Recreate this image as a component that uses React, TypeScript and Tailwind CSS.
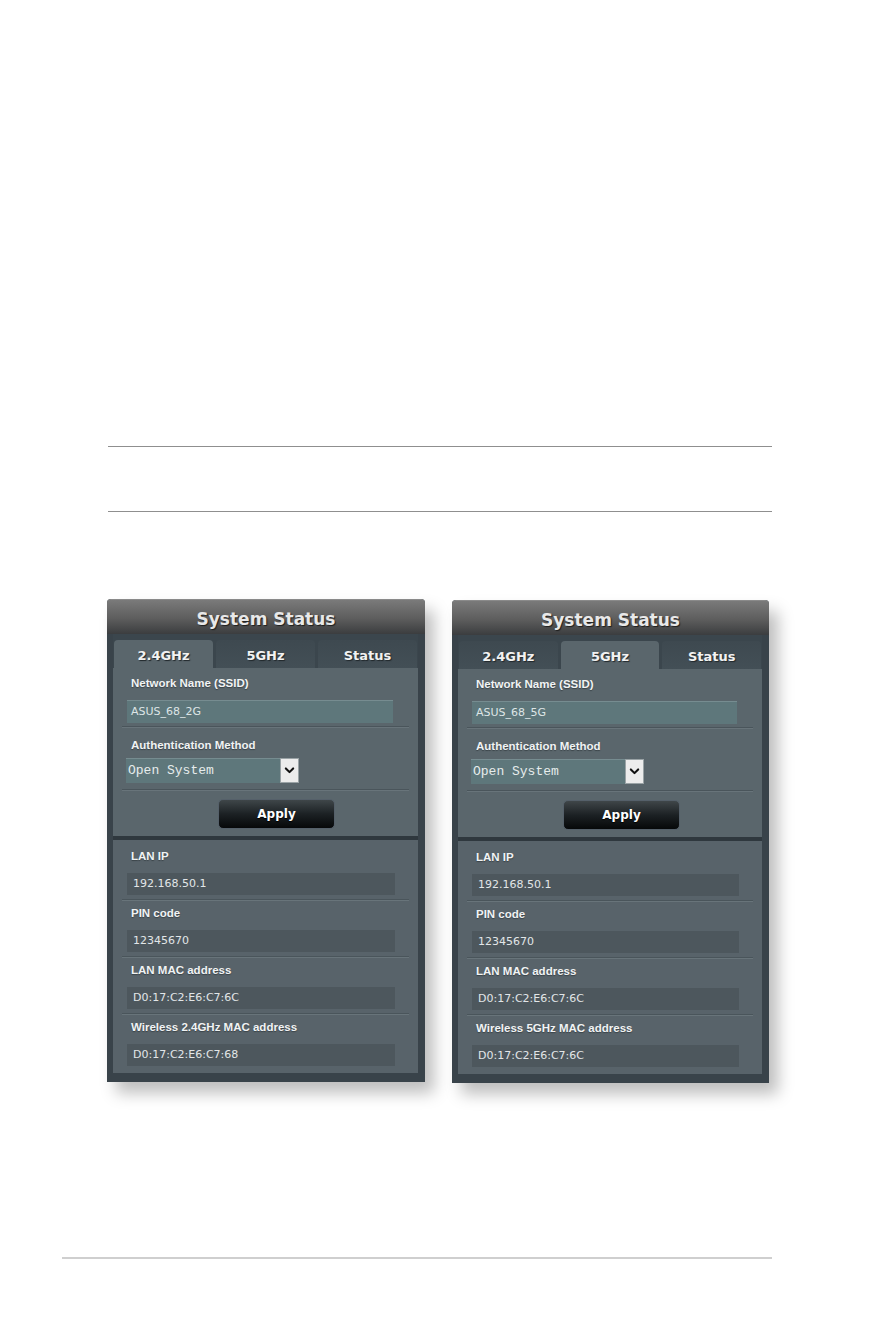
import React from 'react';

type PanelProps = {
  activeTab: number;
  ssid: string;
  wirelessLabel: string;
  wirelessMac: string;
  width: string;
  offset?: string;
};

const tabs = ['2.4GHz', '5GHz', 'Status'];

function Separator() {
  return <div className="mx-[9px] h-px bg-[#4a555b] shadow-[0_1px_0_#68747a]" />;
}

function Chevron() {
  return (
    <svg viewBox="0 0 16 16" className="w-[13px] h-[13px]">
      <path d="M3.5 5.5 L8 10 L12.5 5.5" fill="none" stroke="#111" strokeWidth="2.6" strokeLinecap="round" strokeLinejoin="round" />
    </svg>
  );
}

function InfoRow({ label, value, last }: { label: string; value: string; last?: boolean }) {
  return (
    <div className={last ? '' : 'pb-[6px]'}>
      <div className="h-[16px] pl-[18px] flex items-center text-[11.5px] font-bold text-[#f1f3f4] font-['Liberation_Sans',Arial,sans-serif] [text-shadow:0_1px_1px_#3a4348]">
        {label}
      </div>
      <div className="mt-[8px] ml-[14px] mr-[23px] h-[22px] bg-[#4d575d] flex items-center pl-[6px] text-[11px] text-[#e2e6e8] font-['DejaVu_Sans',Verdana,sans-serif]">
        {value}
      </div>
      {!last && (
        <div className="mt-[4px]">
          <Separator />
        </div>
      )}
    </div>
  );
}

function StatusPanel({ activeTab, ssid, wirelessLabel, wirelessMac, width, offset }: PanelProps) {
  return (
    <div className={`${width} ${offset ?? ''} h-[483px] bg-[#39434a] rounded-t-[4px] flex flex-col shadow-[9px_11px_16px_rgba(0,0,0,0.26)]`}>
      {/* header */}
      <div className="h-[35px] rounded-t-[4px] border-t border-[#8a8a8a] bg-[linear-gradient(to_bottom,#7a7a7a,#5d5d5d_55%,#3b3d3f)] flex items-center justify-center pt-[6px] text-[17px] font-bold text-[#e8e8e8] font-['DejaVu_Sans',Verdana,sans-serif] [text-shadow:1px_1px_1px_#1e1e1e]">
        System Status
      </div>

      <div className="flex-1 flex flex-col pl-[6px] pr-[7px] pb-[9px]">
        {/* tabs */}
        <div className="h-[34px] grid grid-cols-3 gap-[3px] px-px pt-[6px] bg-[#3b464d]">
          {tabs.map((tab, index) => (
            <div
              key={tab}
              className={`rounded-t-[4px] flex items-center justify-center pt-[4px] text-[13px] font-bold text-[#f2f2f2] font-['DejaVu_Sans',Verdana,sans-serif] [text-shadow:1px_1px_1px_#20272b] ${
                index === activeTab ? 'bg-[#5a666c]' : 'bg-[linear-gradient(to_bottom,#3e4950,#434f56)]'
              }`}
            >
              {tab}
            </div>
          ))}
        </div>

        {/* wireless settings */}
        <div className="h-[168px] bg-[#5a666c] pt-[8px] flex flex-col">
          <div className="h-[16px] pl-[18px] flex items-center text-[11.5px] font-bold text-[#f1f3f4] font-['Liberation_Sans',Arial,sans-serif] [text-shadow:0_1px_1px_#3a4348]">
            Network Name (SSID)
          </div>
          <div className="mt-[8px] ml-[14px] mr-[25px] h-[23px] bg-[#5e777b] border-t border-[#768c90] flex items-center pl-[4px] text-[11px] text-[#dde5e6] font-['DejaVu_Sans',Verdana,sans-serif]">
            {ssid}
          </div>
          <div className="mt-[3px]">
            <Separator />
          </div>
          <div className="mt-[11px] h-[16px] pl-[18px] flex items-center text-[11.5px] font-bold text-[#f1f3f4] font-['Liberation_Sans',Arial,sans-serif] [text-shadow:0_1px_1px_#3a4348]">
            Authentication Method
          </div>
          <div className="mt-[4px] ml-[13px] flex h-[25px]">
            <div className="w-[154px] bg-[#5e777b] border-t border-[#768c90] flex items-center pl-[2px] text-[13px] text-[#e6ecec] font-['Liberation_Mono','Courier_New',monospace]">
              Open System
            </div>
            <div className="w-[19px] bg-[#ececec] border border-[#9aa3a6] flex items-center justify-center">
              <Chevron />
            </div>
          </div>
          <div className="mt-[6px]">
            <Separator />
          </div>
          <div className="mt-[9px] ml-[105px] w-[117px] h-[30px] rounded-[5px] border border-[#55606a] bg-[linear-gradient(to_bottom,#3f4649,#1c2124_50%,#060809)] flex items-center justify-center text-[12px] font-bold text-white font-['DejaVu_Sans',Verdana,sans-serif] [text-shadow:0_1px_1px_#000]">
            Apply
          </div>
        </div>

        <div className="h-[4px] bg-[#2f383e]" />

        {/* status info */}
        <div className="h-[233px] bg-[#58636a] pt-[9px] pb-[7px]">
          <InfoRow label="LAN IP" value="192.168.50.1" />
          <InfoRow label="PIN code" value="12345670" />
          <InfoRow label="LAN MAC address" value="D0:17:C2:E6:C7:6C" />
          <InfoRow label={wirelessLabel} value={wirelessMac} last />
        </div>
      </div>
    </div>
  );
}

export default function App() {
  return (
    <div className="w-[883px] h-[1330px] bg-white flex flex-col">
      <div className="mt-[446px] ml-[108px] w-[664px] h-px bg-[#8f8f8f]" />
      <div className="mt-[64px] ml-[108px] w-[664px] h-px bg-[#8f8f8f]" />

      <div className="mt-[87px] ml-[107px] flex items-start gap-[27px]">
        <StatusPanel
          activeTab={0}
          ssid="ASUS_68_2G"
          wirelessLabel="Wireless 2.4GHz MAC address"
          wirelessMac="D0:17:C2:E6:C7:68"
          width="w-[318px]"
        />
        <StatusPanel
          activeTab={1}
          ssid="ASUS_68_5G"
          wirelessLabel="Wireless 5GHz MAC address"
          wirelessMac="D0:17:C2:E6:C7:6C"
          width="w-[317px]"
          offset="mt-px"
        />
      </div>

      <div className="mt-[174px] ml-[62px] w-[710px] h-[2px] bg-[#cfcfcf]" />
    </div>
  );
}
